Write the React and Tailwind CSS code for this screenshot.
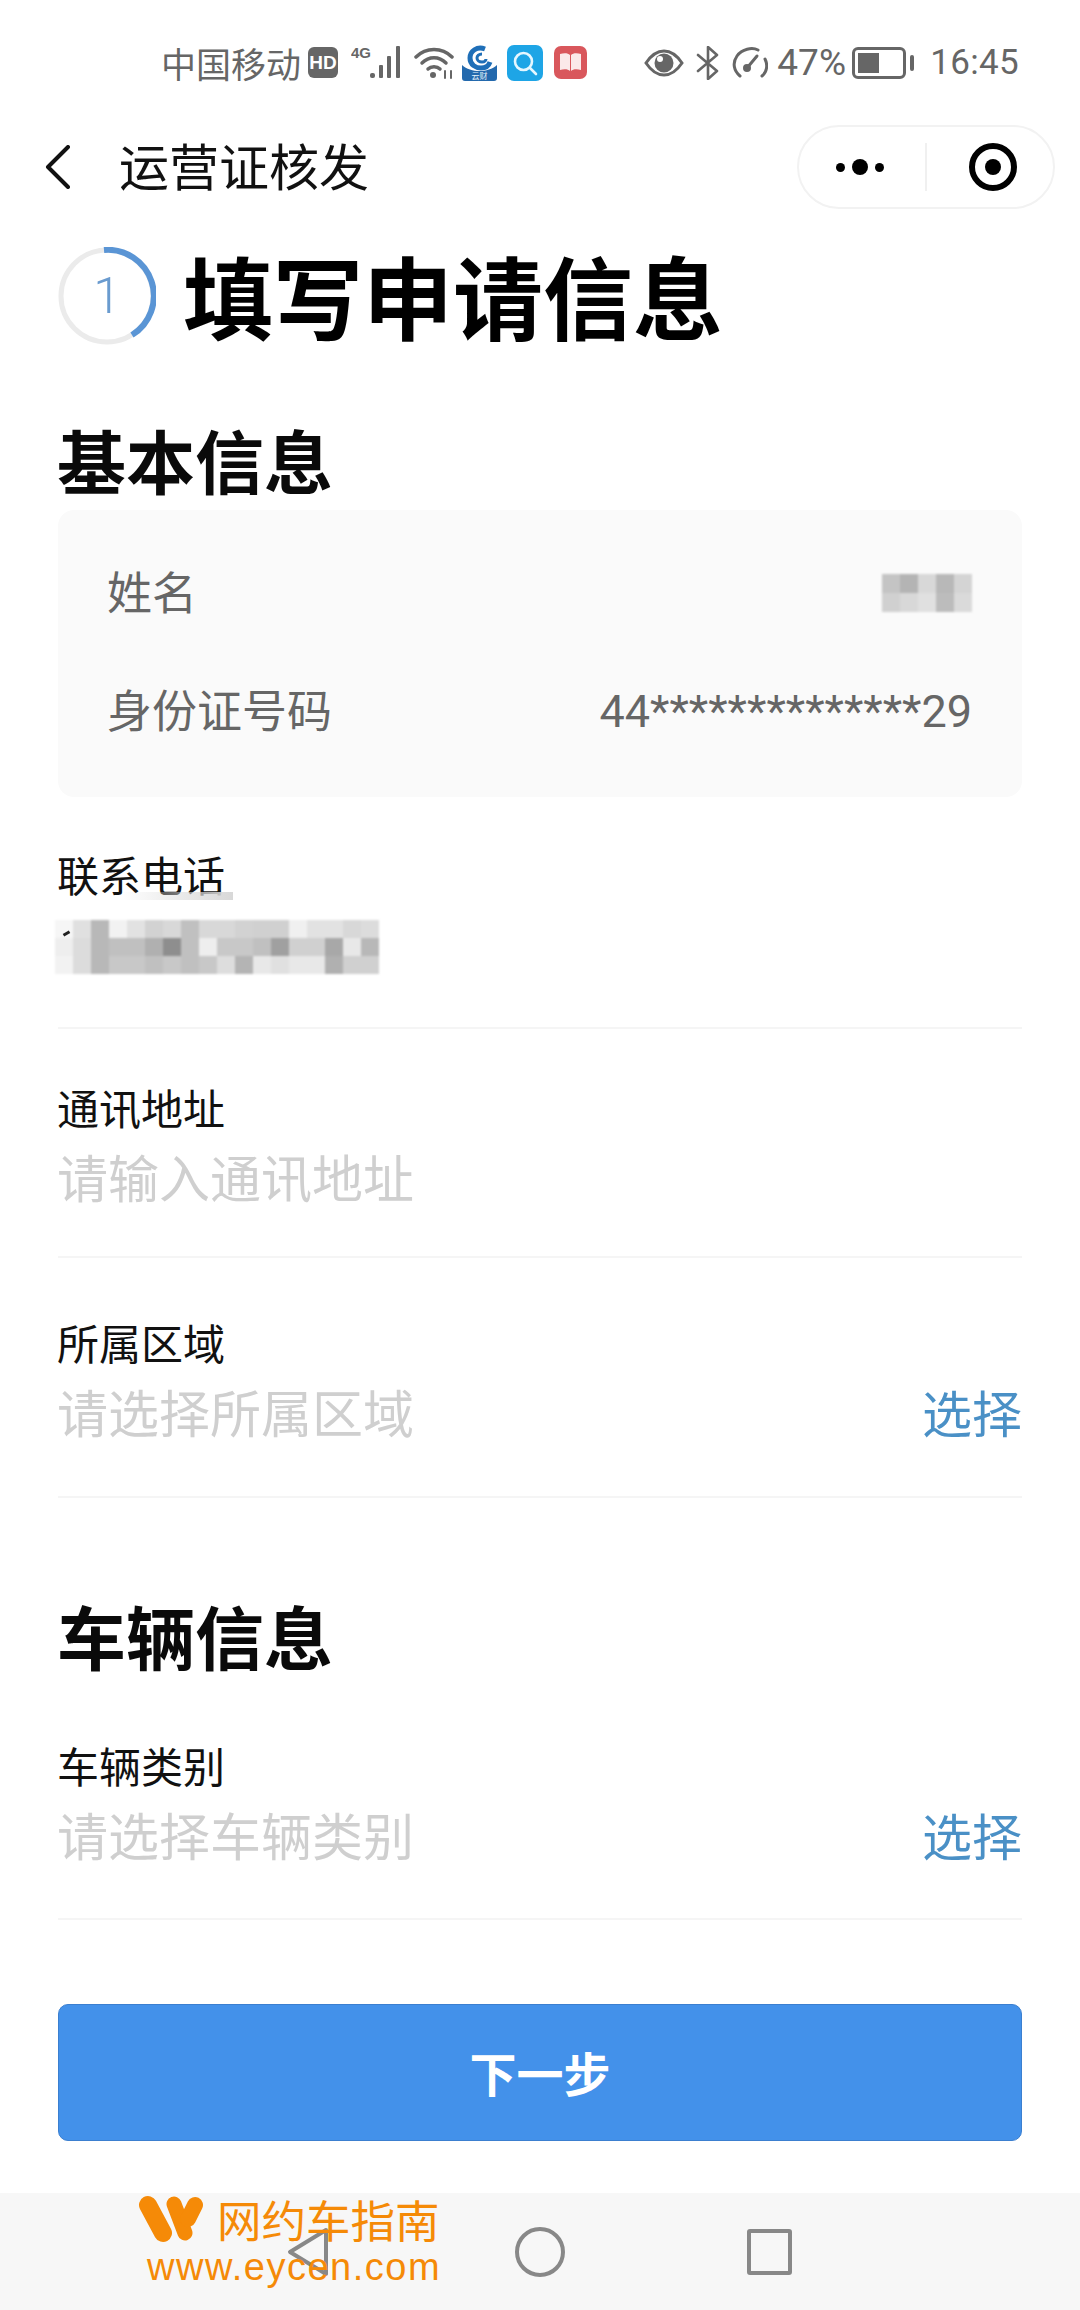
const phoneTiles = [
  "#f6f6f6", "#e0e0e0", "#b8b8b8", "#f2f2f2", "#e2e2e2", "#d2d2d2", "#d8d8d8", "#c0c0c0", "#d8d8d8", "#d8d8d8", "#d2d2d2", "#d0d0d0", "#d0d0d0", "#f0f0f0", "#e2e2e2", "#e2e2e2", "#d8d8d8", "#dcdcdc",
  "#eeeeee", "#dcdcdc", "#b8b8b8", "#c0c0c0", "#c0c0c0", "#b0b0b0", "#8e8e8e", "#c0c0c0", "#eeeeee", "#c8c8c8", "#c8c8c8", "#c0c0c0", "#a0a0a0", "#d0d0d0", "#d0d0d0", "#a8a8a8", "#e8e8e8", "#b8b8b8",
  "#f2f2f2", "#dcdcdc", "#b8b8b8", "#c8c8c8", "#c8c8c8", "#c0c0c0", "#c8c8c8", "#c0c0c0", "#c8c8c8", "#dddddd", "#b4b4b4", "#e8e8e8", "#e0e0e0", "#e8e8e8", "#e8e8e8", "#b0b0b0", "#d0d0d0", "#d0d0d0",
];
const nameTiles = ["#c4c4c4", "#b4b4b4", "#d8d8d8", "#b8b8b8", "#d4d4d4", "#d0d0d0", "#d8d8d8", "#e0e0e0", "#bcbcbc", "#dadada"];

const LeftStatus = () => (
  <div className="flex items-center">
    <span className="text-[35px] leading-none text-[#666] w-[147px]">中国移动</span>
    <div className="w-[30px] h-[31px] rounded-[6px] bg-[#666] text-white text-[19px] font-bold leading-[31px] text-center" style={{ fontFamily: "Liberation Sans" }}>HD</div>
    <svg width="52" height="36" viewBox="0 0 52 36" className="ml-[13px]" fill="#666">
      <text x="0" y="13" fontSize="15" fontWeight="700" fontFamily="Liberation Sans">4G</text>
      <rect x="19" y="28" width="5" height="5" rx="2" />
      <rect x="28" y="20" width="4" height="13" rx="1" />
      <rect x="36" y="11" width="4" height="22" rx="1" />
      <rect x="45" y="1" width="4" height="32" rx="1" />
    </svg>
    <svg width="42" height="32" viewBox="0 0 42 32" className="ml-[11px]" fill="none" stroke="#666" strokeWidth="3.5" strokeLinecap="round">
      <path d="M2 10C12 0 28 0 38 10" />
      <path d="M8 16C15 9 25 9 32 16" />
      <path d="M14 22C17 19 23 19 26 22" />
      <circle cx="19" cy="28" r="3" fill="#666" stroke="none" />
      <path d="M31 24v7M37 24v7" strokeWidth="2" />
    </svg>
    <svg width="37" height="36" viewBox="0 0 37 36" className="ml-[5px]">
      <path d="M1 20C10 28 27 28 36 20V33a3 3 0 0 1-3 3H4a3 3 0 0 1-3-3Z" fill="#2369ad" />
      <path d="M24 4C16 1 9 6 9 13s6 10 11 10 8-3 9-6" fill="none" stroke="#1f6fb8" strokeWidth="5" />
      <path d="M21 9c-3 0-5 2-5 4s2 4 5 4 4-2 4-3" fill="none" stroke="#1f6fb8" strokeWidth="3" />
      <text x="18.5" y="34" textAnchor="middle" fontSize="8" fill="#e4f2fb">云财</text>
    </svg>
    <svg width="36" height="36" viewBox="0 0 36 36" className="ml-[9px]">
      <rect width="36" height="36" rx="7" fill="#1ea5e6" />
      <circle cx="16.5" cy="16.5" r="8.5" fill="none" stroke="#e6f7ff" strokeWidth="2.6" />
      <path d="M23 23l6 6" stroke="#e6f7ff" strokeWidth="2.6" strokeLinecap="round" />
    </svg>
    <svg width="33" height="33" viewBox="0 0 33 33" className="ml-[11px]">
      <rect width="33" height="33" rx="7" fill="#d9575c" />
      <path d="M6 8c4-1 8-1 10 1v16c-2-2-6-2-10-1Z" fill="#fbe9e9" />
      <path d="M27 8c-4-1-8-1-10 1v16c2-2 6-2 10-1Z" fill="#fbe9e9" />
    </svg>
  </div>
);

const RightStatus = () => (
  <div className="flex items-center leading-none text-[#666]">
    <svg width="40" height="28" viewBox="0 0 40 28">
      <path d="M2 14C8 5 14 2 20 2s12 3 18 12c-6 9-12 12-18 12S8 23 2 14Z" fill="none" stroke="#666" strokeWidth="3" />
      <circle cx="20" cy="14" r="9.5" fill="#666" />
      <circle cx="16" cy="10" r="3" fill="#fff" />
    </svg>
    <svg width="24" height="34" viewBox="0 0 24 34" className="ml-[12px]" fill="none" stroke="#666" strokeWidth="2.6" strokeLinejoin="round" strokeLinecap="round">
      <path d="M2 9l19 16-9 8V1l9 8L2 25" />
    </svg>
    <svg width="36" height="32" viewBox="0 0 36 32" className="ml-[12px]" fill="none" stroke="#666" strokeWidth="3" strokeLinecap="round">
      <path d="M8 29C2 24 0 16 5 9S20 0 26 3" />
      <path d="M33 12c3 6 2 13-3 17" />
      <path d="M15 21L25 9" />
      <circle cx="15" cy="21" r="2.5" fill="#666" />
    </svg>
    <span className="ml-[9px] w-[68px] text-center text-[37px]" style={{ fontFamily: "Roboto" }}>47%</span>
    <div className="ml-[7px] flex items-center">
      <div className="w-[54px] h-[32px] border-[3px] border-[#666] rounded-[6px] p-[3px]">
        <div className="w-[21px] h-full bg-[#666]" />
      </div>
      <div className="ml-[4px] w-[4px] h-[16px] bg-[#666] rounded-[2px]" />
    </div>
    <span className="ml-[16px] text-[35px] tracking-[0.3px]" style={{ fontFamily: "Roboto" }}>16:45</span>
  </div>
);

const Field = ({ label, placeholder, action, children, pb, mt }) => (
  <div className={`mx-[58px] border-b-2 border-[#f5f5f5] ${pb} ${mt}`}>
    <div className="h-[60px] pb-[4px] -ml-[1px] flex items-center text-[42px] text-[#111]">{label}</div>
    <div className="h-[84px] pb-[8px] -ml-[1px] flex items-center justify-between">
      {children || <span className="text-[51px] text-[#cfcfcf]">{placeholder}</span>}
      {action && <span className="text-[50px] text-[#4a90c6]">{action}</span>}
    </div>
  </div>
);

export default function App() {
  return (
    <div className="relative w-[1080px] h-[2310px] overflow-hidden bg-white flex flex-col" style={{ fontFamily: '"Noto Sans CJK SC", "Noto Sans", sans-serif' }}>
      <div className="h-[125px] pl-[161px] pr-[61px] flex items-center justify-between">
        <LeftStatus />
        <RightStatus />
      </div>

      <div className="h-[84px] pl-[45px] pr-[25px] flex items-center">
        <svg width="26" height="44" viewBox="0 0 26 44" fill="none" stroke="#111" strokeWidth="4" strokeLinecap="round" strokeLinejoin="round">
          <path d="M23 2L3 22l20 20" />
        </svg>
        <span className="ml-[48px] pb-[6px] text-[50px] text-[#111]">运营证核发</span>
        <div className="ml-auto w-[258px] h-[84px] rounded-full border-2 border-[#f2f2f2] flex items-center">
          <div className="ml-[37px] flex items-center gap-[7px]">
            <span className="w-[9px] h-[9px] rounded-full bg-black" />
            <span className="w-[16px] h-[16px] rounded-full bg-black" />
            <span className="w-[9px] h-[9px] rounded-full bg-black" />
          </div>
          <div className="ml-[41px] w-[2px] h-[48px] bg-[#f0f0f0]" />
          <div className="ml-[42px] w-[48px] h-[48px] rounded-full border-[6px] border-black flex items-center justify-center">
            <span className="w-[16px] h-[16px] rounded-full bg-black" />
          </div>
        </div>
      </div>

      <div className="mt-[31px] h-[116px] pl-[58px] flex items-center">
        <div className="relative w-[98px] h-[98px] mb-[4px] flex items-center justify-center">
          <svg width="98" height="98" viewBox="0 0 98 98" className="absolute inset-0">
            <circle cx="49" cy="49" r="46" fill="none" stroke="#ebebeb" strokeWidth="5" />
            <path d="M46 3A46 46 0 0 1 74 88" fill="none" stroke="#5a95d5" strokeWidth="6" />
          </svg>
          <span className="text-[50px] leading-none font-light text-[#6a9bcf]" style={{ fontFamily: "Roboto" }}>1</span>
        </div>
        <h1 className="ml-[27px] pb-[8px] text-[90px] leading-none font-bold text-black">填写申请信息</h1>
      </div>

      <h2 className="mt-[64px] h-[84px] ml-[57px] text-[69px] leading-[78px] font-bold text-[#0a0a0a]">基本信息</h2>

      <div className="mt-[6px] mx-[58px] h-[287px] rounded-[16px] bg-[#fafafa] px-[50px] pt-[39px] flex flex-col gap-[28px] text-[45px] text-[#666]">
        <div className="h-[90px] pb-[6px] flex items-center justify-between">
          <span className="-ml-[1px]">姓名</span>
          <div className="grid grid-cols-5 w-[90px] blur-[1px] mb-[-4px]">
            {nameTiles.map((c, i) => (
              <div key={i} className="h-[19px]" style={{ backgroundColor: c }} />
            ))}
          </div>
        </div>
        <div className="h-[90px] pb-[6px] flex items-center justify-between">
          <span className="-ml-[1px]">身份证号码</span>
          <span className="pt-[5px]" style={{ fontFamily: "Roboto" }}>44**************29</span>
        </div>
      </div>

      <div className="relative">
        <Field label="联系电话" pb="pb-[38px]" mt="mt-[48px]">
          <div className="-ml-[2px] mt-[8px] blur-[1px]">
            <div className="grid grid-cols-[repeat(18,18px)]">
              {phoneTiles.map((c, i) => (
                <div key={i} className="h-[18px]" style={{ backgroundColor: c }} />
              ))}
            </div>
          </div>
        </Field>
        <div className="absolute left-[120px] top-[95px] w-[113px] h-[8px] bg-gradient-to-r from-transparent to-[#d8d8d8]" />
        <div className="absolute left-[63px] top-[135px] w-[7px] h-[3px] bg-[#222] -rotate-30" />
      </div>
      <Field label="通讯地址" placeholder="请输入通讯地址" pb="pb-[34px]" mt="mt-[49px]" />
      <Field label="所属区域" placeholder="请选择所属区域" action="选择" pb="pb-[39px]" mt="mt-[55px]" />

      <h2 className="mt-[98px] h-[84px] ml-[57px] text-[69px] leading-[78px] font-bold text-[#0a0a0a]">车辆信息</h2>

      <Field label="车辆类别" placeholder="请选择车辆类别" action="选择" pb="pb-[38px]" mt="mt-[56px]" />

      <button className="mt-[84px] mx-[58px] h-[137px] rounded-[10px] bg-[#4391ea] border border-[#3b7fd0] text-white text-[47px] font-bold">下一步</button>

      <div className="mt-auto h-[117px] bg-[#f7f7f7] flex items-center">
        <div className="flex items-center pl-[287px]">
          <svg width="42" height="50" viewBox="0 0 42 50" fill="none" stroke="#888" strokeWidth="4" strokeLinejoin="round">
            <path d="M39 3L3 25l36 22Z" />
          </svg>
          <div className="ml-[186px] w-[50px] h-[50px] rounded-full border-[4px] border-[#888]" />
          <div className="ml-[182px] w-[45px] h-[46px] rounded-[3px] border-[4px] border-[#888]" />
        </div>
      </div>

      <div className="absolute left-[138px] top-[2195px] flex flex-col">
        <div className="flex items-center">
          <svg width="66" height="48" viewBox="0 0 66 48" fill="none" stroke="#f58a07" strokeLinecap="round">
            <path d="M10 10L25 38" strokeWidth="18" />
            <path d="M36 9L47 38" strokeWidth="15" />
            <path d="M57 10L50 24" strokeWidth="16" />
          </svg>
          <span className="ml-[13px] text-[44.5px] leading-none text-[#f58a07]">网约车指南</span>
        </div>
        <span className="ml-[9px] mt-[5px] text-[38px] leading-none tracking-[1.5px] text-[#f58a07]" style={{ fontFamily: "Liberation Sans" }}>www.eycen.com</span>
      </div>
    </div>
  );
}
